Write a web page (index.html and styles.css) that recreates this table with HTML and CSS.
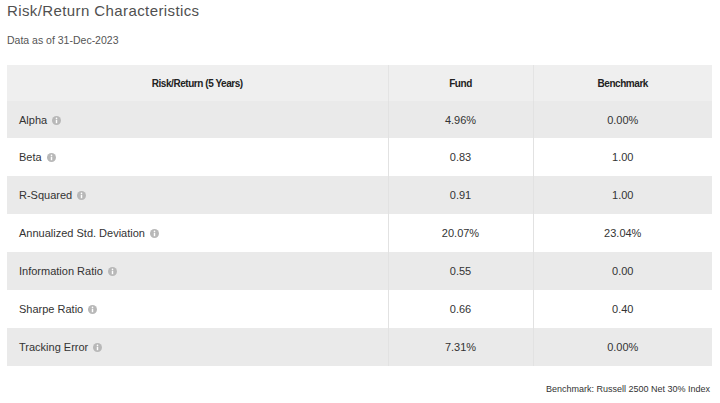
FILE: index.html
```html
<!DOCTYPE html>
<html>
<head>
<meta charset="utf-8">
<link rel="stylesheet" href="styles.css">
</head>
<body>
<div class="page">
  <h1 class="title">Risk/Return Characteristics</h1>
  <p class="asof">Data as of 31-Dec-2023</p>
  <table class="rr">
    <colgroup><col class="c1"><col class="c2"><col class="c3"></colgroup>
    <thead>
      <tr><th>Risk/Return (5 Years)</th><th>Fund</th><th>Benchmark</th></tr>
    </thead>
    <tbody>
      <tr><td class="lbl">Alpha<svg class="info" viewBox="0 0 10 10"><circle cx="5" cy="5" r="5"/><rect x="4.2" y="4.2" width="1.6" height="3.8"/><circle cx="5" cy="2.7" r="0.9"/></svg></td><td>4.96%</td><td>0.00%</td></tr>
      <tr><td class="lbl">Beta<svg class="info" viewBox="0 0 10 10"><circle cx="5" cy="5" r="5"/><rect x="4.2" y="4.2" width="1.6" height="3.8"/><circle cx="5" cy="2.7" r="0.9"/></svg></td><td>0.83</td><td>1.00</td></tr>
      <tr><td class="lbl">R-Squared<svg class="info" viewBox="0 0 10 10"><circle cx="5" cy="5" r="5"/><rect x="4.2" y="4.2" width="1.6" height="3.8"/><circle cx="5" cy="2.7" r="0.9"/></svg></td><td>0.91</td><td>1.00</td></tr>
      <tr><td class="lbl">Annualized Std. Deviation<svg class="info" viewBox="0 0 10 10"><circle cx="5" cy="5" r="5"/><rect x="4.2" y="4.2" width="1.6" height="3.8"/><circle cx="5" cy="2.7" r="0.9"/></svg></td><td>20.07%</td><td>23.04%</td></tr>
      <tr><td class="lbl">Information Ratio<svg class="info" viewBox="0 0 10 10"><circle cx="5" cy="5" r="5"/><rect x="4.2" y="4.2" width="1.6" height="3.8"/><circle cx="5" cy="2.7" r="0.9"/></svg></td><td>0.55</td><td>0.00</td></tr>
      <tr><td class="lbl">Sharpe Ratio<svg class="info" viewBox="0 0 10 10"><circle cx="5" cy="5" r="5"/><rect x="4.2" y="4.2" width="1.6" height="3.8"/><circle cx="5" cy="2.7" r="0.9"/></svg></td><td>0.66</td><td>0.40</td></tr>
      <tr><td class="lbl">Tracking Error<svg class="info" viewBox="0 0 10 10"><circle cx="5" cy="5" r="5"/><rect x="4.2" y="4.2" width="1.6" height="3.8"/><circle cx="5" cy="2.7" r="0.9"/></svg></td><td>7.31%</td><td>0.00%</td></tr>
    </tbody>
  </table>
  <p class="foot">Benchmark: Russell 2500 Net 30% Index</p>
</div>
</body>
</html>
```

FILE: styles.css
```css
html, body {
  margin: 0;
  padding: 0;
  background: #fff;
}
.page {
  font-family: "Liberation Sans", Arial, sans-serif;
  color: #333;
  padding: 2px 8px 0 7px;
}
.title {
  margin: 0;
  font-size: 15px;
  line-height: 18px;
  font-weight: normal;
  letter-spacing: 0.4px;
  color: #505050;
}
.asof {
  margin: 13px 0 0;
  font-size: 10.5px;
  line-height: 14px;
  color: #555;
}
.rr {
  margin-top: 18px;
  width: 705px;
  border-collapse: collapse;
  table-layout: fixed;
}
.c1 { width: 381px; }
.c2 { width: 145px; }
.c3 { width: 179px; }
.rr th {
  height: 36px;
  padding: 0;
  background: #efefef;
  font-size: 10px;
  letter-spacing: -0.45px;
  font-weight: bold;
  color: #222;
  text-align: center;
  border-left: 1px solid #e4e4e4;
}
.rr td {
  height: 38px;
  padding: 0;
  font-size: 11px;
  color: #333;
  text-align: center;
  border-left: 1px solid #e2e2e2;
}
.rr th:first-child, .rr td:first-child {
  border-left: none;
}
.rr td.lbl {
  text-align: left;
  padding-left: 12px;
}
.rr tbody tr:nth-child(odd) td {
  background: #eaeaea;
}
.rr tbody tr:nth-child(even) td {
  background: #fff;
}
.rr tbody tr:first-child td {
  height: 37px;
}
.info {
  width: 9px;
  height: 9px;
  margin-left: 5px;
  vertical-align: -1px;
}
.info circle:first-child { fill: #b8b8b8; }
.info rect, .info circle + rect + circle { fill: #fff; }
.foot {
  margin: 17px 0 0;
  font-size: 9px;
  line-height: 12px;
  text-align: right;
  color: #333;
  padding-right: 2px;
}
```
